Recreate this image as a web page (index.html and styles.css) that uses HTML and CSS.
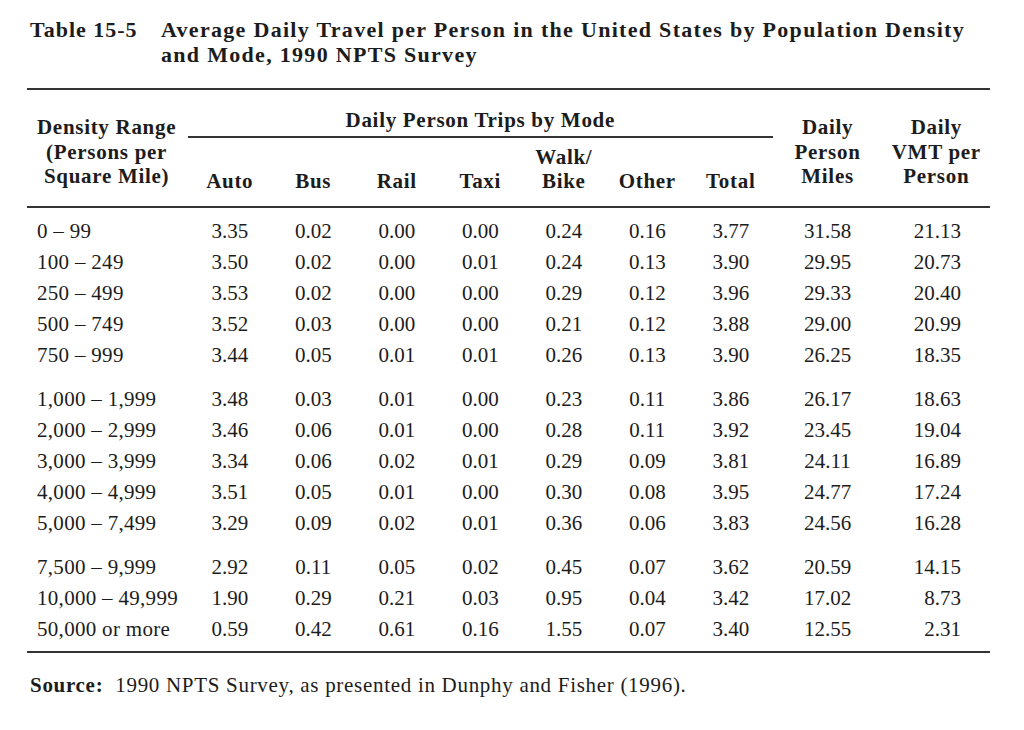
FILE: index.html
```html
<!DOCTYPE html>
<html lang="en">
<head>
<meta charset="utf-8">
<title>Table 15-5</title>
<link rel="stylesheet" href="styles.css">
</head>
<body>
<div class="page">
  <div class="caption">
    <div class="cap-label">Table 15-5</div>
    <div class="cap-text">Average Daily Travel per Person in the United States by Population Density and Mode, 1990 NPTS Survey</div>
  </div>
  <table class="data">
    <colgroup>
      <col class="c-range">
      <col class="c-mode"><col class="c-mode"><col class="c-mode"><col class="c-mode"><col class="c-mode"><col class="c-mode"><col class="c-mode">
      <col class="c-miles">
      <col class="c-vmt">
    </colgroup>
    <thead>
      <tr class="h1">
        <th rowspan="2" class="h-range"><span class="stack">Density Range<br>(Persons per<br>Square Mile)</span></th>
        <th colspan="7" class="h-span">Daily Person Trips by Mode</th>
        <th rowspan="2" class="h-side">Daily<br>Person<br>Miles</th>
        <th rowspan="2" class="h-side">Daily<br>VMT per<br>Person</th>
      </tr>
      <tr class="h2">
        <th>Auto</th><th>Bus</th><th>Rail</th><th>Taxi</th><th>Walk/<br>Bike</th><th>Other</th><th>Total</th>
      </tr>
    </thead>
    <tbody class="first">
      <tr><td>0 – 99</td><td>3.35</td><td>0.02</td><td>0.00</td><td>0.00</td><td>0.24</td><td>0.16</td><td>3.77</td><td>31.58</td><td>21.13</td></tr>
      <tr><td>100 – 249</td><td>3.50</td><td>0.02</td><td>0.00</td><td>0.01</td><td>0.24</td><td>0.13</td><td>3.90</td><td>29.95</td><td>20.73</td></tr>
      <tr><td>250 – 499</td><td>3.53</td><td>0.02</td><td>0.00</td><td>0.00</td><td>0.29</td><td>0.12</td><td>3.96</td><td>29.33</td><td>20.40</td></tr>
      <tr><td>500 – 749</td><td>3.52</td><td>0.03</td><td>0.00</td><td>0.00</td><td>0.21</td><td>0.12</td><td>3.88</td><td>29.00</td><td>20.99</td></tr>
      <tr><td>750 – 999</td><td>3.44</td><td>0.05</td><td>0.01</td><td>0.01</td><td>0.26</td><td>0.13</td><td>3.90</td><td>26.25</td><td>18.35</td></tr>
    </tbody>
    <tbody class="group">
      <tr><td>1,000 – 1,999</td><td>3.48</td><td>0.03</td><td>0.01</td><td>0.00</td><td>0.23</td><td>0.11</td><td>3.86</td><td>26.17</td><td>18.63</td></tr>
      <tr><td>2,000 – 2,999</td><td>3.46</td><td>0.06</td><td>0.01</td><td>0.00</td><td>0.28</td><td>0.11</td><td>3.92</td><td>23.45</td><td>19.04</td></tr>
      <tr><td>3,000 – 3,999</td><td>3.34</td><td>0.06</td><td>0.02</td><td>0.01</td><td>0.29</td><td>0.09</td><td>3.81</td><td>24.11</td><td>16.89</td></tr>
      <tr><td>4,000 – 4,999</td><td>3.51</td><td>0.05</td><td>0.01</td><td>0.00</td><td>0.30</td><td>0.08</td><td>3.95</td><td>24.77</td><td>17.24</td></tr>
      <tr><td>5,000 – 7,499</td><td>3.29</td><td>0.09</td><td>0.02</td><td>0.01</td><td>0.36</td><td>0.06</td><td>3.83</td><td>24.56</td><td>16.28</td></tr>
    </tbody>
    <tbody class="group last">
      <tr><td>7,500 – 9,999</td><td>2.92</td><td>0.11</td><td>0.05</td><td>0.02</td><td>0.45</td><td>0.07</td><td>3.62</td><td>20.59</td><td>14.15</td></tr>
      <tr><td>10,000 – 49,999</td><td>1.90</td><td>0.29</td><td>0.21</td><td>0.03</td><td>0.95</td><td>0.04</td><td>3.42</td><td>17.02</td><td>8.73</td></tr>
      <tr><td>50,000 or more</td><td>0.59</td><td>0.42</td><td>0.61</td><td>0.16</td><td>1.55</td><td>0.07</td><td>3.40</td><td>12.55</td><td>2.31</td></tr>
    </tbody>
  </table>
  <p class="source"><b>Source:</b>&nbsp; 1990 NPTS Survey, as presented in Dunphy and Fisher (1996).</p>
</div>
</body>
</html>
```
FILE: styles.css
```css
html, body {
  margin: 0;
  padding: 0;
  background: #ffffff;
}
body {
  font-family: "Liberation Serif", "Times New Roman", serif;
  color: #1c1c1c;
}
.page {
  padding: 17px 35px 0 27px;
}
.caption {
  display: flex;
  font-weight: bold;
  font-size: 22px;
  line-height: 25px;
  letter-spacing: 1.3px;
  padding-left: 3px;
  margin-bottom: 21px;
}
.cap-label {
  flex: 0 0 131px;
  letter-spacing: 1px;
}
.cap-text {
  flex: 0 0 822px;
}
.data {
  width: 962px;
  border-collapse: collapse;
  table-layout: fixed;
  border-top: 2px solid #333;
  border-bottom: 2px solid #333;
}
.c-range { width: 161px; }
.c-mode { width: 83.5px; }
.c-miles { width: 110px; }
.c-vmt { width: 107.5px; }
thead {
  border-bottom: 2px solid #333;
}
th {
  font-weight: bold;
  font-size: 21px;
  letter-spacing: 0.7px;
  line-height: 24.5px;
  padding: 0;
  text-align: center;
  vertical-align: bottom;
}
.h-range, .h-side {
  vertical-align: top;
  padding-top: 25px;
  padding-bottom: 17px;
}
.h-range {
  text-align: left;
  padding-left: 10px;
}
.stack {
  display: inline-block;
  text-align: center;
  white-space: nowrap;
}
.h-span {
  padding-top: 14px;
  padding-bottom: 3px;
  border-bottom: 2px solid #333;
}
.h2 th {
  padding-bottom: 12px;
}
td {
  font-size: 21px;
  line-height: 31.2px;
  padding: 0;
  text-align: center;
  white-space: nowrap;
}
td:first-child {
  text-align: left;
  padding-left: 10px;
  letter-spacing: 0.3px;
}
td:last-child {
  text-align: right;
  padding-right: 29px;
}
tbody.first tr:first-child td {
  padding-top: 8px;
}
tbody.group tr:first-child td {
  padding-top: 12px;
}
tbody.last tr:last-child td {
  padding-bottom: 6px;
}
.source {
  margin: 20px 0 0 3px;
  font-size: 21px;
  line-height: 24px;
  letter-spacing: 0.7px;
}
.source b {
  font-weight: bold;
}
```
